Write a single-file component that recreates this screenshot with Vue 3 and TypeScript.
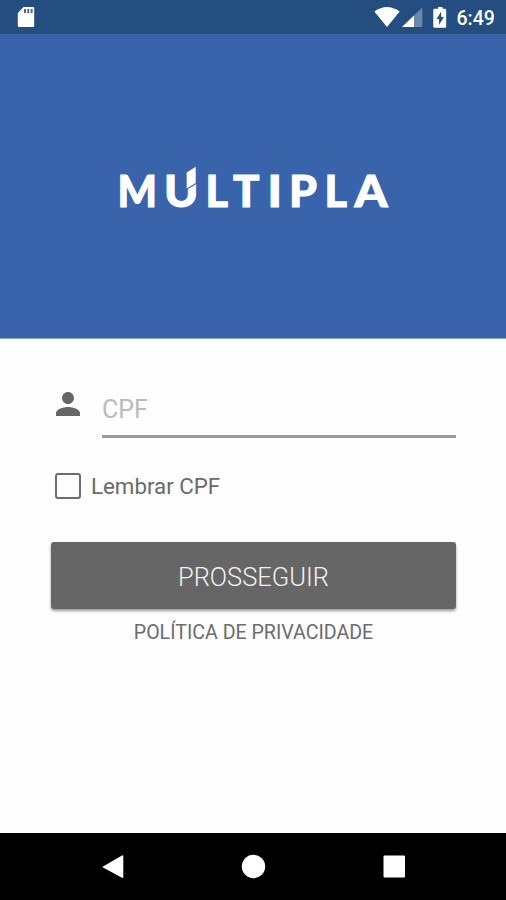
<script setup lang="ts">
import { ref } from 'vue'

interface Glyph {
  char: string
  x: number
  width: number
}

// Wordmark letters; x is relative to the left edge of the logo.
const glyphs: Glyph[] = [
  { char: 'M', x: -0.5, width: 39.5 },
  { char: 'U', x: 46, width: 34.5 },
  { char: 'L', x: 87.5, width: 22.5 },
  { char: 'T', x: 115, width: 26.5 },
  { char: 'I', x: 149.5, width: 14.5 },
  { char: 'P', x: 171, width: 28 },
  { char: 'L', x: 206.5, width: 22.5 },
  { char: 'A', x: 236.5, width: 33 },
]

const cpf = ref('')
const remember = ref(false)
</script>

<template>
  <div class="screen">
    <header class="status">
      <svg class="sd" width="18" height="22" viewBox="0 0 18 22">
        <path d="M6.5 1H16q1.2 0 1.2 1.2V19.8Q17.200 21 16 21H2Q.8 21 .8 19.800V7Z" fill="#fff" />
        <path d="M7 3h2v4H7zM10.300 3h2v4h-2zM13.600 3h2v4h-2z" fill="#52668c" />
      </svg>
      <div class="tray">
        <svg width="122" height="34" viewBox="0 0 122 34">
          <path d="M.3 11.500Q13 2.500 25.700 11.500L13 27Z" fill="#fff" />
          <path d="M48.300 7.500V27H28Z" fill="#6c89ad" />
          <path d="M40 15.500V27H28Z" fill="#fff" />
          <path d="M64 7h4.500V8.800h2.500q1.200 0 1.200 1.200V26.500q0 1.200-1.200 1.200H60.500q-1.200 0-1.200-1.200V10q0-1.200 1.200-1.200H64Z" fill="#fff" />
          <path d="M67.200 11.500l-4.700 7.500h2.600v6l4.700-8h-2.600Z" fill="#244e80" />
          <text x="82.500" y="25">6:49</text>
        </svg>
      </div>
    </header>
    <section class="hero">
      <svg class="logo" width="270" height="44" viewBox="0 0 270 44">
        <text v-for="(g, i) in glyphs" :key="i" :x="g.x" y="41.200" :textLength="g.width" lengthAdjust="spacingAndGlyphs">{{ g.char }}</text>
        <path d="M66 25.500L80 17V0H66Z" fill="#3964ac" />
        <path d="M68.700 6.500L77.700 .8V17L68.700 22.500Z" fill="#fff" />
      </svg>
    </section>
    <main class="form">
      <div class="field">
        <svg width="36" height="36" viewBox="0 0 24 24">
          <path fill="#666" d="M12 12c2.210 0 4-1.790 4-4s-1.790-4-4-4-4 1.790-4 4 1.790 4 4 4zm0 2c-2.670 0-8 1.340-8 4v2h16v-2c0-2.660-5.330-4-8-4z" />
        </svg>
        <input v-model="cpf" type="text" placeholder="CPF" />
      </div>
      <label class="remember">
        <input v-model="remember" type="checkbox" />
        <span>Lembrar CPF</span>
      </label>
      <button class="submit" type="button"><span>PROSSEGUIR</span></button>
      <a class="privacy">POLÍTICA DE PRIVACIDADE</a>
    </main>
    <nav class="nav">
      <svg width="506" height="67" viewBox="0 0 506 67">
        <path d="M103 33.500L122 22.500q1.300-.5 1.300.8V44q0 1.300-1.300.8L103 34.500q-1-.5 0-1Z" fill="#fff" />
        <circle cx="253.500" cy="33.500" r="11.700" fill="#fff" />
        <rect x="383.500" y="22.500" width="21.500" height="22" rx="1" fill="#fff" />
      </svg>
    </nav>
  </div>
</template>

<style>
body {
  margin: 0;
}
</style>

<style scoped>
.screen {
  width: 506px;
  height: 900px;
  display: flex;
  flex-direction: column;
  background: #fdfdfd;
  font-family: Roboto, "Liberation Sans", sans-serif;
  overflow: hidden;
}
.status {
  height: 34px;
  background: #244e80;
  display: flex;
  justify-content: space-between;
  box-sizing: border-box;
  padding: 0 10px 0 17px;
}
.sd {
  margin-top: 6px;
}
.tray svg {
  display: block;
}
.tray text {
  font-size: 19.5px;
  font-weight: 500;
  fill: #fff;
}
.hero {
  height: 304px;
  background: #3964ac;
  border-bottom: 1px solid #8fa6d0;
  display: flex;
  justify-content: center;
  align-items: flex-start;
}
.logo {
  margin-top: 131.500px;
  overflow: visible;
}
.logo text {
  font-family: Lato, sans-serif;
  font-weight: 900;
  font-size: 44.500px;
  fill: #fff;
  stroke: #fff;
  stroke-width: 1px;
}
.form {
  flex: 1;
  display: flex;
  flex-direction: column;
  padding: 47px 50px 0 51px;
}
.field {
  display: flex;
  align-items: flex-start;
  height: 52px;
}
.field svg {
  margin-left: -1px;
}
.field input {
  margin-left: 16px;
  flex: 1;
  min-width: 0;
  height: 52px;
  box-sizing: border-box;
  border: 0;
  border-bottom: 3px solid #999;
  outline: 0;
  padding: 0 0 3px;
  background: transparent;
  font: 400 25px Roboto, sans-serif;
  color: #555;
}
.field input::placeholder {
  color: #bbb;
  opacity: 1;
}
.remember {
  margin-top: 35px;
  height: 26px;
  display: flex;
  align-items: center;
  padding-left: 4px;
  font-size: 22.300px;
  color: #6a6a6a;
}
.remember input {
  appearance: none;
  width: 26px;
  height: 26px;
  box-sizing: border-box;
  margin: 0 10px 0 0;
  border: 2px solid #6c6c6c;
  border-radius: 3px;
}
.submit {
  margin-top: 43px;
  height: 67px;
  border: 0;
  border-radius: 3px;
  background: #666;
  box-shadow: 0 2px 3px rgba(0, 0, 0, .4);
  color: #f2f2f2;
  font: 300 25.500px Roboto, sans-serif;
  padding: 2px 0 0;
}
.privacy {
  margin-top: 12px;
  align-self: center;
  font-size: 19.600px;
  line-height: 24px;
  color: #6c6c6c;
  white-space: nowrap;
}
.nav {
  height: 67px;
  background: #000;
}
.nav svg {
  display: block;
}
</style>
